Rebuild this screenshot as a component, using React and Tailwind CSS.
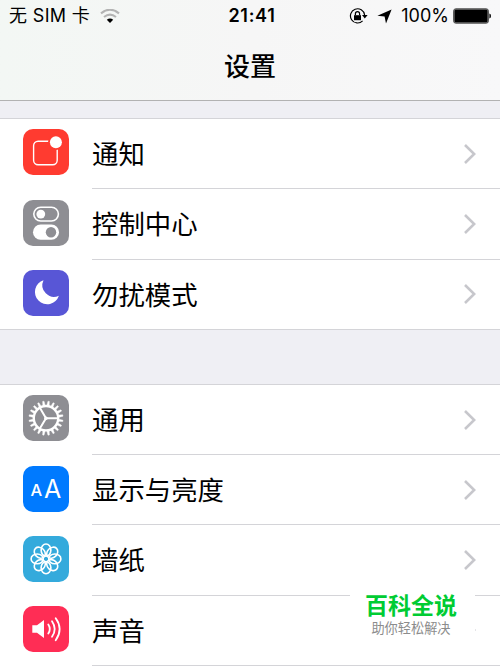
import React from "react";

const NotificationIcon = () => (
	<svg viewBox="0 0 46 46" className="h-full w-full" fill="none">
		<rect x="10.6" y="12.2" width="23.6" height="23.6" rx="4.5" stroke="#fff" strokeWidth="1.4" />
		<circle cx="32.9" cy="13.2" r="7.9" fill="#ff3b30" />
		<circle cx="32.9" cy="13.2" r="6" fill="#fff" />
	</svg>
);

const ControlIcon = () => (
	<svg viewBox="0 0 46 46" className="h-full w-full" fill="none">
		<rect x="10.8" y="7.2" width="24.6" height="13.8" rx="6.9" stroke="#fff" strokeWidth="1.6" />
		<circle cx="17.8" cy="14.1" r="4.4" fill="#fff" />
		<rect x="10" y="24.6" width="26" height="15.2" rx="7.6" fill="#fff" />
		<circle cx="28" cy="32.2" r="5.2" fill="#8e8e93" />
	</svg>
);

const MoonIcon = () => (
	<svg viewBox="0 0 46 46" className="h-full w-full">
		<path d="M20.5 10.2A12.3 12.3 0 1 0 35.9 25.8A11.7 11.7 0 0 1 20.5 10.2Z" fill="#fff" />
	</svg>
);

const teeth = Array.from({ length: 20 }, (_, i) => i * 18);

const GearIcon = () => (
	<svg viewBox="0 0 46 46" className="h-full w-full" fill="none" stroke="#fff">
		<circle cx="23" cy="23.2" r="12.2" strokeWidth="2.3" />
		{teeth.map((angle) => (
			<path key={angle} d="M21.8 10.9L22.3 6.1H23.7L24.2 10.9Z" fill="#fff" strokeWidth="0.4" transform={`rotate(${angle + 9} 23 23.2)`} />
		))}
		<path d="M23 23.2H35M23 23.2L16.7 12.6M23 23.2L16.7 33.8" strokeWidth="2" />
		<circle cx="23" cy="23.2" r="1.8" fill="#fff" stroke="none" />
	</svg>
);

const DisplayIcon = () => (
	<svg viewBox="0 0 46 46" className="h-full w-full font-['Inter',sans-serif]" fill="#fff">
		<text x="7.6" y="30.4" fontSize="16.5" fontWeight="500">A</text>
		<text x="20.9" y="32.4" fontSize="25" fontWeight="400">A</text>
	</svg>
);

const petals = [0, 45, 90, 135, 180, 225, 270, 315];

const WallpaperIcon = () => (
	<svg viewBox="0 0 46 46" className="h-full w-full" fill="none" stroke="#fff" strokeWidth="1.6">
		{petals.map((angle) => (
			<ellipse key={angle} cx="23" cy="14.1" rx="4.9" ry="6.1" transform={`rotate(${angle} 23 22.9)`} />
		))}
	</svg>
);

const SoundIcon = () => (
	<svg viewBox="0 0 46 46" className="h-full w-full" fill="none" stroke="#fff">
		<path d="M9.3 19.2H14L21 14V32L14 26.8H9.3Z" fill="#fff" stroke="none" />
		<path d="M25.3 18.4Q28.3 23 25.3 27.6M29 15.2Q34.4 23 29 30.8M32.7 12.3Q40.6 23 32.7 34.3" strokeWidth="1.8" strokeLinecap="round" />
	</svg>
);

const groups = [
	[
		{ label: "通知", icon: NotificationIcon, color: "bg-[#ff3b30]", height: "h-[70.33px]" },
		{ label: "控制中心", icon: ControlIcon, color: "bg-[#8e8e93]", height: "h-[70.33px]" },
		{ label: "勿扰模式", icon: MoonIcon, color: "bg-[#5856d6]", height: "h-[69.33px]" },
	],
	[
		{ label: "通用", icon: GearIcon, color: "bg-[#8e8e93]", height: "h-[70.33px]" },
		{ label: "显示与亮度", icon: DisplayIcon, color: "bg-[#007aff]", height: "h-[70px]" },
		{ label: "墙纸", icon: WallpaperIcon, color: "bg-[#34aadc]", height: "h-[70.33px]" },
		{ label: "声音", icon: SoundIcon, color: "bg-[#ff2d55]", height: "h-[70.33px]" },
	],
];

const StatusBar = () => (
	<div className="grid h-8 grid-cols-[1fr_auto_1fr] items-center pl-[9px] pr-[9px] text-[18px] leading-none">
		<div className="flex items-center gap-[10px]">
			<span className="whitespace-pre tracking-[0.35px]">无 SIM 卡</span>
			<svg viewBox="0 0 20 15" className="h-[15px] w-5" fill="none">
				<path d="M1 4.4Q10-3 19 4.4M4 8Q10 3.2 16 8" stroke="#b3b3b3" strokeWidth="2.1" />
				<path d="M6.8 10.8Q10 8 13.2 10.8L10 14Z" fill="#000" />
			</svg>
		</div>
		<span className="pl-[4px] text-[18px] font-semibold tracking-[0.7px]">21:41</span>
		<div className="flex items-center justify-end">
			<svg viewBox="0 0 19 16" className="mr-[9px] h-4 w-[19px]" fill="none">
				<path d="M15.6 7A7.1 7.1 0 1 0 13.6 12.9" stroke="#000" strokeWidth="1.2" />
				<path d="M13 6.9H18.6L15.8 10.4Z" fill="#000" />
				<rect x="5" y="7.2" width="7" height="5" fill="#000" />
				<path d="M6.4 7.3V5.7A2.1 2.1 0 0 1 10.6 5.7V7.3" stroke="#000" strokeWidth="1.2" />
			</svg>
			<svg viewBox="0 0 15 15" className="mr-[9px] h-[15px] w-[15px]">
				<path d="M14.6 0.4L9 14.4L7.6 7.5L0.4 6.7Z" fill="#000" />
			</svg>
			<span className="mr-[4px]">100%</span>
			<svg viewBox="0 0 38 16" className="h-4 w-[38px]">
				<rect x="0.5" y="0.7" width="35" height="14.6" rx="2.5" fill="#777" stroke="#444" strokeWidth="0.8" />
				<rect x="1.6" y="1.8" width="32.8" height="12.4" rx="1.3" fill="#000" />
				<path d="M36.4 5.5Q38 5.7 38 8T36.4 10.5Z" fill="#000" />
			</svg>
		</div>
	</div>
);

const SettingsRow = ({ item, last }) => {
	const Icon = item.icon;

	return (
		<div className={`flex pl-[23px] ${item.height}`}>
			<div className={`mt-[10.3px] h-[46px] w-[46px] shrink-0 overflow-hidden rounded-[10px] ${item.color}`}>
				<Icon />
			</div>
			<div className={`ml-[23px] flex flex-1 items-center justify-between pr-[24px] ${last ? "" : "border-b border-[#d4d4d8]"}`}>
				<span className="pt-px text-[26.4px] leading-none">{item.label}</span>
				<svg viewBox="0 0 12 20" className="h-5 w-3" fill="none">
					<path d="M1 1L10.2 10L1 19" stroke="#c7c7cc" strokeWidth="2.6" />
				</svg>
			</div>
		</div>
	);
};

export default function App() {
	return (
		<div className="relative h-[666px] w-[500px] overflow-hidden bg-[#efeff4] font-['Inter','Noto_Sans_CJK_SC',sans-serif] text-black">
			<header className="h-[101px] border-b border-[#b2b2b2] bg-linear-to-r from-[#f3f7f4] via-[#f6f6f6] to-[#f8f8f9]">
				<StatusBar />
				<h1 className="pt-[22px] text-center text-[26px] font-medium leading-none">设置</h1>
			</header>

			<section className="mt-[17px] border-y border-[#d4d4d8] bg-white">
				{groups[0].map((item, index) => (
					<SettingsRow key={item.label} item={item} last={index === 2} />
				))}
			</section>

			<section className="mt-[54px] border-t border-[#d4d4d8] bg-white">
				{groups[1].map((item) => (
					<SettingsRow key={item.label} item={item} />
				))}
			</section>

			<div className="absolute left-[350px] top-[585px] h-[74px] w-[125px] bg-white text-center">
				<p className="mr-[3px] pt-[10px] text-[23px] font-bold leading-none text-[#00cc33]">百科全说</p>
				<p className="mr-[3px] mt-[4px] text-[13.2px] leading-none text-[#8c8c8c]">助你轻松解决</p>
			</div>
		</div>
	);
}
